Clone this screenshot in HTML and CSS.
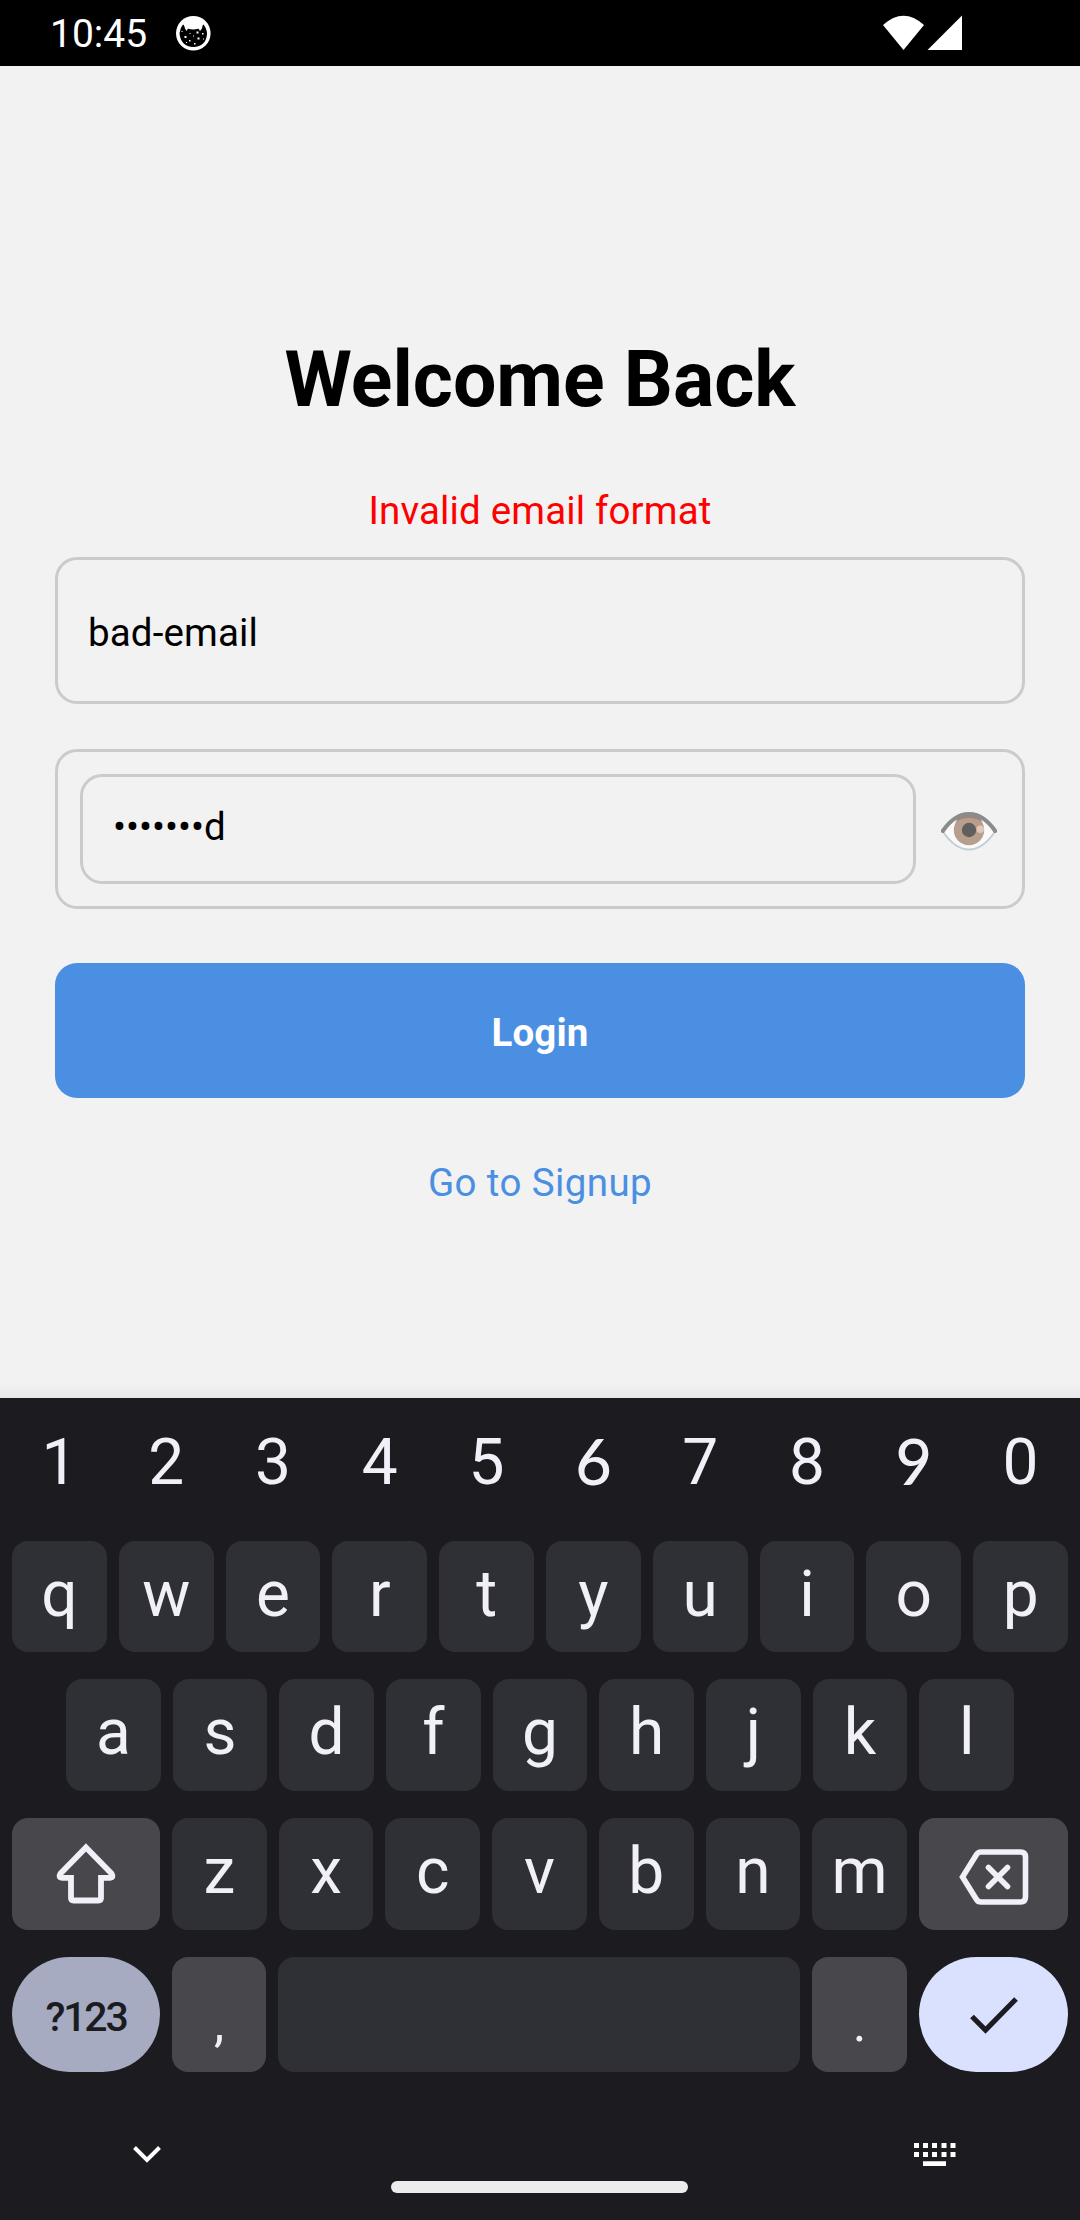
FILE: index.html
```html
<!DOCTYPE html>
<html lang="en">
<head>
<meta charset="utf-8">
<title>Welcome Back</title>
<link rel="stylesheet" href="styles.css">
</head>
<body>
<div class="screen">
  <header class="status">
    <span class="clock">10:45</span>
    <svg class="status-cat" viewBox="0 0 36 36" width="36" height="36">
      <circle cx="18.300" cy="18.300" r="17.300" fill="#fff"/>
      <path d="M4.500 18Q5 13 8 9.500Q11 11 12.500 13.500Q18 12.500 24 13.500Q25.500 11 28.500 9.500Q32 14 32 19Q31 31.500 18.300 32Q5.500 31.500 4.500 18Z" fill="#000"/>
      <path d="M8.500 8.500L28 8.500L27 13.500L25 16L23.500 13.500Q18 15.500 13 13.500L11.500 16L10 13.500Z" fill="#fff"/>
      <path d="M9.500 21h2v2h-2zM14.500 18h1v1h-1zM21.500 16.500h2v2h-2zM27 18h1.500v1.500h-1.500zM14 25h1.500v1.500h-1.500zM18 20.500h1v1h-1zM22.500 22.500h2v2h-2zM19 28h1.500v1.500h-1.500zM28 23.500h1v1h-1zM6.500 16h1v1h-1zM11 27h1v1h-1z" fill="#fff"/>
    </svg>
    <svg class="status-signal" viewBox="0 0 80 36" width="80" height="36">
      <path d="M0 10Q20.500 -8.500 41 10L20.500 35Z" fill="#fff"/>
      <path d="M44.500 35L79 .500V35Z" fill="#fff"/>
    </svg>
  </header>

  <main class="form">
    <h1 class="title">Welcome Back</h1>
    <p class="error">Invalid email format</p>
    <div class="field email">bad-email</div>
    <div class="field password">
      <div class="field password-text"><span class="dots">•••••••</span>d</div>
      <svg class="eye" viewBox="0 0 56 40" width="56" height="40">
        <path d="M1.500 20Q14 2 28 2T54.500 20Q42 38.500 28 38.500T1.500 20Z" fill="#fafafa" stroke="#c3cfd5" stroke-width="2"/>
        <circle cx="28" cy="19" r="15.200" fill="#b79e8d"/>
        <path d="M14.500 11Q28 3 41.500 11L39 7Q28 2 17 7Z" fill="#9e8679"/>
        <circle cx="28" cy="19" r="7.200" fill="#5f5f5f"/>
        <circle cx="39.300" cy="18.200" r="3.700" fill="#e2c8b9"/>
        <path d="M1.800 20Q13.500 3 28 3T54.200 20" fill="none" stroke="#8b8b8b" stroke-width="4" stroke-linecap="round"/>
      </svg>
    </div>
    <div class="login">Login</div>
    <a class="signup">Go to Signup</a>
  </main>

  <section class="keyboard">
    <div class="row numbers">
      <span class="key">1</span><span class="key">2</span><span class="key">3</span><span class="key">4</span><span class="key">5</span><span class="key slant">6</span><span class="key">7</span><span class="key">8</span><span class="key slant">9</span><span class="key">0</span>
    </div>
    <div class="row top">
      <span class="key">q</span><span class="key">w</span><span class="key">e</span><span class="key">r</span><span class="key">t</span><span class="key">y</span><span class="key">u</span><span class="key">i</span><span class="key">o</span><span class="key">p</span>
    </div>
    <div class="row home">
      <span class="key">a</span><span class="key">s</span><span class="key">d</span><span class="key">f</span><span class="key">g</span><span class="key">h</span><span class="key">j</span><span class="key">k</span><span class="key">l</span>
    </div>
    <div class="row lower">
      <span class="key side icon">
        <svg viewBox="0 0 62 61" width="62" height="61"><path d="M31 4.500L56.500 30.500Q59 34.500 55 34.800H46V55Q46 57.500 43.500 57.500H18.500Q16 57.500 16 55V34.800H7Q3 34.500 5.500 30.500Z" fill="none" stroke="#f1eff7" stroke-width="5.800"/></svg>
      </span>
      <span class="key">z</span><span class="key">x</span><span class="key">c</span><span class="key">v</span><span class="key">b</span><span class="key">n</span><span class="key">m</span>
      <span class="key side icon back">
        <svg viewBox="0 0 70 56" width="70" height="56"><path d="M3.500 28L17.500 5.500Q19 3 22 3H61.500Q66.500 3 66.500 8V48Q66.500 53 61.500 53H22Q19 53 17.500 50.500Z" fill="none" stroke="#f1eff7" stroke-width="5.600"/><path d="M29.500 18.500L48.500 37.500M48.500 18.500L29.500 37.500" fill="none" stroke="#f1eff7" stroke-width="5.600" stroke-linecap="round"/></svg>
      </span>
    </div>
    <div class="row bottom">
      <span class="key symbols">?123</span>
      <span class="key side punct">,</span>
      <span class="key"></span>
      <span class="key side punct">.</span>
      <span class="key enter">
        <svg viewBox="0 0 50 38" width="50" height="38"><path d="M3 20.500L16.500 34L47 3" fill="none" stroke="#1b1b20" stroke-width="5.200"/></svg>
      </span>
    </div>
    <footer class="nav">
      <svg class="chevron" viewBox="0 0 28 17" width="28" height="17"><path d="M1.500 1.500L14 14L26.500 1.500" fill="none" stroke="#fff" stroke-width="4"/></svg>
      <span class="handle"></span>
      <svg class="switcher" viewBox="0 0 42 23" width="42" height="23"><path d="M0 0h5v5h-5zM9 0h5v5h-5zM18 0h5v5h-5zM27.500 0h5v5h-5zM36.500 0h5v5h-5zM0 9h5v5h-5zM9 9h5v5h-5zM18 9h5v5h-5zM27.500 9h5v5h-5zM36.500 9h5v5h-5zM9 18.300h23v4.700h-23z" fill="#fff"/></svg>
    </footer>
  </section>
</div>
</body>
</html>
```
FILE: styles.css
```css
* { box-sizing: border-box; }

body {
  margin: 0;
  background: #f2f2f2;
  font-family: Roboto, "Liberation Sans", sans-serif;
}

svg { display: block; }

.screen {
  width: 1080px;
  height: 2220px;
  display: flex;
  flex-direction: column;
  overflow: hidden;
}

.status {
  height: 66px;
  background: #000;
  color: #fff;
  display: flex;
  align-items: flex-start;
  padding: 15px 117px 0 50px;
}

.clock {
  width: 125px;
  font-size: 39px;
  line-height: 39px;
}

.status-signal { margin-left: auto; }

.form {
  height: 1332px;
  padding: 268px 55px 0;
  display: flex;
  flex-direction: column;
  font-size: 38.500px;
  line-height: 46px;
  letter-spacing: 0.150px;
  color: #000;
  background: linear-gradient(#f2f2f2 calc(100% - 14px), #e8e8e8);
}

.title {
  margin: 0;
  font-size: 77px;
  line-height: 92px;
  font-weight: 700;
  letter-spacing: 0;
  text-align: center;
}

.error {
  margin: 62px 0 23px;
  color: #f00;
  text-align: center;
}

.field {
  border: 3px solid #cbcbcb;
  border-radius: 22px;
  display: flex;
  align-items: center;
}

.email {
  height: 147px;
  padding: 5px 30px 0;
}

.password {
  height: 160px;
  margin-top: 45px;
  padding: 0 25px 0 22px;
  justify-content: space-between;
}

.password-text {
  width: 836px;
  height: 110px;
  padding: 0 30px 4px;
}

.dots { letter-spacing: 0; }

.eye { margin-top: 3px; }

.login {
  height: 135px;
  margin-top: 54px;
  padding-top: 5px;
  border-radius: 22px;
  background: #4b8fe3;
  color: #fff;
  font-weight: 700;
  display: flex;
  align-items: center;
  justify-content: center;
}

.signup {
  margin-top: 62px;
  color: #4b8fe3;
  letter-spacing: 0.400px;
  text-align: center;
}

.keyboard {
  height: 822px;
  padding: 11px 12px 0;
  background: #1b1b20;
  color: #f1eff7;
  display: flex;
  flex-direction: column;
  font-size: 64px;
  line-height: 75px;
}

.row {
  height: 112px;
  display: grid;
  grid-template-columns: repeat(10, 1fr);
  column-gap: 12px;
}

.key {
  display: flex;
  align-items: center;
  justify-content: center;
  padding-bottom: 5px;
  border-radius: 16px;
  background: #2f3035;
}

.numbers .key { background: none; }

.numbers .slant {
  font-family: Lato, Roboto, sans-serif;
  font-size: 63px;
  font-weight: 500;
  padding-bottom: 9px;
}

.top {
  height: 111px;
  margin-top: 20px;
}

.home {
  margin: 27px 54px 0;
  grid-template-columns: repeat(9, 1fr);
}

.lower {
  margin-top: 27px;
  grid-template-columns: 148px repeat(7, 1fr) 149px;
}

.bottom {
  height: 115px;
  margin-top: 27px;
  grid-template-columns: 148px 94px 1fr 95px 149px;
}

.side { background: #48474c; }

.icon { padding: 0 0 2px; }

.back { padding: 5px 0 0; }

.punct {
  font-size: 52px;
  padding: 18px 0 0;
}

.symbols {
  border-radius: 58px;
  background: #a6abc2;
  color: #1b1b20;
  font-size: 41px;
  font-weight: 500;
  letter-spacing: -2.200px;
  padding: 5px 0 0;
}

.enter {
  border-radius: 58px;
  background: #dae1ff;
  padding: 0;
}

.nav {
  height: 148px;
  display: grid;
  grid-template-columns: 258px 297px 1fr;
  padding: 0 0 0 121px;
  align-items: start;
}

.chevron { margin-top: 74px; }

.handle {
  height: 12px;
  margin-top: 109px;
  border-radius: 6px;
  background: #ececec;
}

.switcher {
  margin-top: 71px;
  margin-left: 226px;
}
```
